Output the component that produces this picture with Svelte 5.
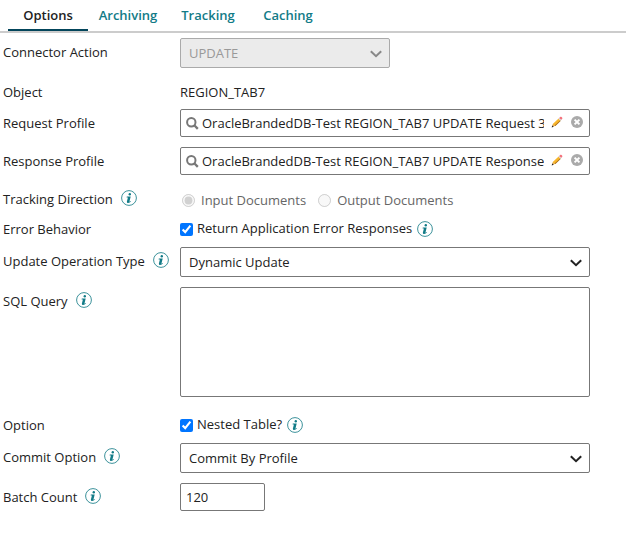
<script lang="ts">
	const tabs = ['Options', 'Archiving', 'Tracking', 'Caching'];
	let activeTab = $state('Options');

	let requestProfile = $state('OracleBrandedDB-Test REGION_TAB7 UPDATE Request 3');
	let responseProfile = $state('OracleBrandedDB-Test REGION_TAB7 UPDATE Response');
	let direction = $state('input');
	let returnErrors = $state(true);
	let updateType = $state('Dynamic Update');
	let sqlQuery = $state('');
	let nestedTable = $state(true);
	let commitOption = $state('Commit By Profile');
	let batchCount = $state('120');
</script>

{#snippet info(topic: string)}
	<button type="button" class="info" aria-label="Help for {topic}">
		<svg viewBox="0 0 16 16" width="16" height="16" aria-hidden="true">
			<circle cx="8" cy="8" r="7.4" fill="#fff" stroke="#3c929b" stroke-width="1" />
			<circle cx="8.8" cy="4.3" r="1.2" fill="#127b87" />
			<path
				d="M5.800 6.500h3.900L8.500 11.300c-.1.5.3.500 1.300-.4l.3.400c-1.100 1.200-1.900 1.600-2.900 1.600-1.100 0-1.500-.7-1.300-1.500L6.900 7.400H5.600z"
				fill="#127b87"
			/>
		</svg>
	</button>
{/snippet}

{#snippet chevron()}
	<svg class="chevron" viewBox="0 0 12 8" width="12" height="8" aria-hidden="true">
		<path d="M.8 1.200 6 6.200l5.200-5" fill="none" stroke="currentColor" stroke-width="2" />
	</svg>
{/snippet}

{#snippet lookupIcon()}
	<svg viewBox="0 0 13 13" width="13" height="13" aria-hidden="true">
		<circle cx="5.300" cy="5.300" r="4.200" fill="none" stroke="#777" stroke-width="2" />
		<path d="m8.300 8.300 3.500 3.600" stroke="#777" stroke-width="2.300" />
	</svg>
{/snippet}

{#snippet lookupActions(name: string, clear: () => void)}
	<button type="button" class="edit" aria-label="Edit {name}">
		<svg viewBox="0 0 12 12" width="12" height="12" aria-hidden="true">
			<path d="m1.200 10.800.8-3L7.600 2.600l2 2-5.400 5.200z" fill="#f8b62c" />
			<path d="m3.600 9.600 5.700-5.300.6.500-5.500 5.300z" fill="#a86a10" />
			<path d="m7.400 2.700 1-1 2.200 2.100-1 1z" fill="#d8dbe0" />
			<path d="m8.200 1.900 1-1c.4-.4.9-.3 1.300.1l.6.600c.4.400.4.900 0 1.300l-.9.900z" fill="#f4707a" />
			<path d="m1.800 8.200 2 1.900-2.800.9z" fill="#e0b070" />
			<path d="m1.200 9.400 1.500 1.400-2 .6z" fill="#222" />
		</svg>
	</button>
	<button type="button" class="clear" aria-label="Clear {name}" onclick={clear}>
		<svg viewBox="0 0 12 12" width="12" height="12" aria-hidden="true">
			<circle cx="6" cy="6" r="6" fill="#aaa" />
			<path d="m3.600 3.600 4.800 4.800m0-4.800L3.600 8.400" stroke="#fff" stroke-width="2" />
		</svg>
	</button>
{/snippet}

<div class="panel">
	<div class="tabs" role="tablist">
		{#each tabs as tab}
			<button
				type="button"
				role="tab"
				class="tab"
				class:active={tab === activeTab}
				aria-selected={tab === activeTab}
				onclick={() => (activeTab = tab)}>{tab}</button
			>
		{/each}
	</div>

	<form>
		<div class="row">
			<div class="label"><label for="action">Connector Action</label></div>
			<div class="select short">
				<select id="action" disabled>
					<option>UPDATE</option>
				</select>
				{@render chevron()}
			</div>
		</div>

		<div class="row text-row">
			<div class="label">Object</div>
			<div class="value">REGION_TAB7</div>
		</div>

		<div class="row">
			<div class="label"><label for="request">Request Profile</label></div>
			<div class="lookup">
				{@render lookupIcon()}
				<input id="request" type="text" bind:value={requestProfile} />
				{@render lookupActions('request profile', () => (requestProfile = ''))}
			</div>
		</div>

		<div class="row">
			<div class="label"><label for="response">Response Profile</label></div>
			<div class="lookup">
				{@render lookupIcon()}
				<input id="response" type="text" bind:value={responseProfile} />
				{@render lookupActions('response profile', () => (responseProfile = ''))}
			</div>
		</div>

		<div class="row radio-row">
			<div class="label">
				<span id="direction">Tracking Direction</span>
				{@render info('Tracking Direction')}
			</div>
			<div class="radios" role="radiogroup" aria-labelledby="direction">
				<label>
					<input type="radio" value="input" bind:group={direction} disabled />
					Input Documents
				</label>
				<label>
					<input type="radio" value="output" bind:group={direction} disabled />
					Output Documents
				</label>
			</div>
		</div>

		<div class="row text-row">
			<div class="label">Error Behavior</div>
			<div class="check">
				<label><input type="checkbox" bind:checked={returnErrors} />Return Application Error Responses</label>
				{@render info('Error Behavior')}
			</div>
		</div>

		<div class="row">
			<div class="label">
				<label for="update-type">Update Operation Type</label>
				{@render info('Update Operation Type')}
			</div>
			<div class="select">
				<select id="update-type" bind:value={updateType}>
					<option>Dynamic Update</option>
				</select>
				{@render chevron()}
			</div>
		</div>

		<div class="row">
			<div class="label">
				<label for="sql">SQL Query</label>
				{@render info('SQL Query')}
			</div>
			<textarea id="sql" bind:value={sqlQuery}></textarea>
		</div>

		<div class="row text-row">
			<div class="label">Option</div>
			<div class="check">
				<label><input type="checkbox" bind:checked={nestedTable} />Nested Table?</label>
				{@render info('Nested Table')}
			</div>
		</div>

		<div class="row">
			<div class="label">
				<label for="commit">Commit Option</label>
				{@render info('Commit Option')}
			</div>
			<div class="select">
				<select id="commit" bind:value={commitOption}>
					<option>Commit By Profile</option>
				</select>
				{@render chevron()}
			</div>
		</div>

		<div class="row">
			<div class="label">
				<label for="batch">Batch Count</label>
				{@render info('Batch Count')}
			</div>
			<div><input id="batch" class="batch" type="text" bind:value={batchCount} /></div>
		</div>
	</form>
</div>

<style>
	:global(body) {
		margin: 0;
		background: #fff;
	}

	.panel {
		color: #222;
		font: 13px/20px 'Open Sans', sans-serif;
	}

	.panel * {
		box-sizing: border-box;
	}

	button,
	input,
	select,
	textarea {
		margin: 0;
		color: inherit;
		font: inherit;
	}

	button {
		padding: 0;
		border: 0;
		background: none;
		cursor: pointer;
	}

	.tabs {
		display: flex;
		padding-left: 8px;
		border-bottom: 2px solid #ccc;
	}

	.tab {
		width: 80px;
		height: 31px;
		border-bottom: 2px solid transparent;
		color: #127b87;
		font-weight: 600;
	}

	.tab.active {
		border-color: #03455b;
		color: #222;
	}

	form {
		padding: 5px 36px 0 3px;
	}

	.row {
		display: grid;
		grid-template-columns: 177px minmax(0, 1fr);
		align-items: start;
		padding-bottom: 10px;
	}

	.text-row {
		padding-bottom: 7px;
	}

	.radio-row {
		padding-bottom: 5px;
	}

	.label {
		display: flex;
		gap: 8px;
		padding-top: 4px;
		white-space: nowrap;
	}

	.value {
		padding-top: 4px;
	}

	.info {
		flex: none;
		width: 16px;
		height: 16px;
	}

	svg {
		display: block;
		flex: none;
	}

	.label .info {
		margin-top: 1px;
	}

	.select {
		position: relative;
	}

	.short {
		width: 210px;
	}

	select {
		display: block;
		width: 100%;
		height: 30px;
		padding: 0 30px 0 8px;
		border: 1px solid #777;
		border-radius: 2px;
		background: #fff;
		appearance: none;
	}

	select:disabled {
		border-color: #aaa;
		background: #ebebeb;
		color: #999;
		opacity: 1;
	}

	.chevron {
		position: absolute;
		top: 12px;
		right: 8px;
		pointer-events: none;
	}

	select:disabled + .chevron {
		color: #888;
	}

	.lookup {
		display: flex;
		align-items: center;
		height: 28px;
		padding: 0 6px 0 5px;
		border: 1px solid #777;
		border-radius: 2px;
	}

	.lookup input {
		flex: 1;
		min-width: 0;
		margin: 0 7px 0 3px;
		padding: 0;
		border: 0;
		outline: 0;
		background: none;
	}

	.edit,
	.clear {
		margin-bottom: 2px;
	}

	.clear {
		margin-left: 8px;
	}

	.radios {
		display: flex;
		gap: 12px;
		padding: 5px 0 0 2px;
		color: #666;
	}

	.radios label,
	.check label {
		display: flex;
		align-items: center;
	}

	.radios label {
		gap: 6px;
	}

	input[type='radio'],
	input[type='checkbox'] {
		width: 13px;
		height: 13px;
	}

	.check {
		display: flex;
		align-items: center;
		gap: 5px;
		padding: 3px 0 2px;
	}

	.check label {
		gap: 4px;
	}

	.check input {
		margin-top: 2px;
	}

	.check .info {
		margin-top: 2px;
	}

	textarea {
		display: block;
		width: 100%;
		height: 110px;
		margin-bottom: 4px;
		border: 1px solid #777;
		border-radius: 2px;
		resize: none;
	}

	.batch {
		display: block;
		width: 85px;
		height: 28px;
		padding: 0 5px;
		border: 1px solid #777;
		border-radius: 2px;
	}
</style>
